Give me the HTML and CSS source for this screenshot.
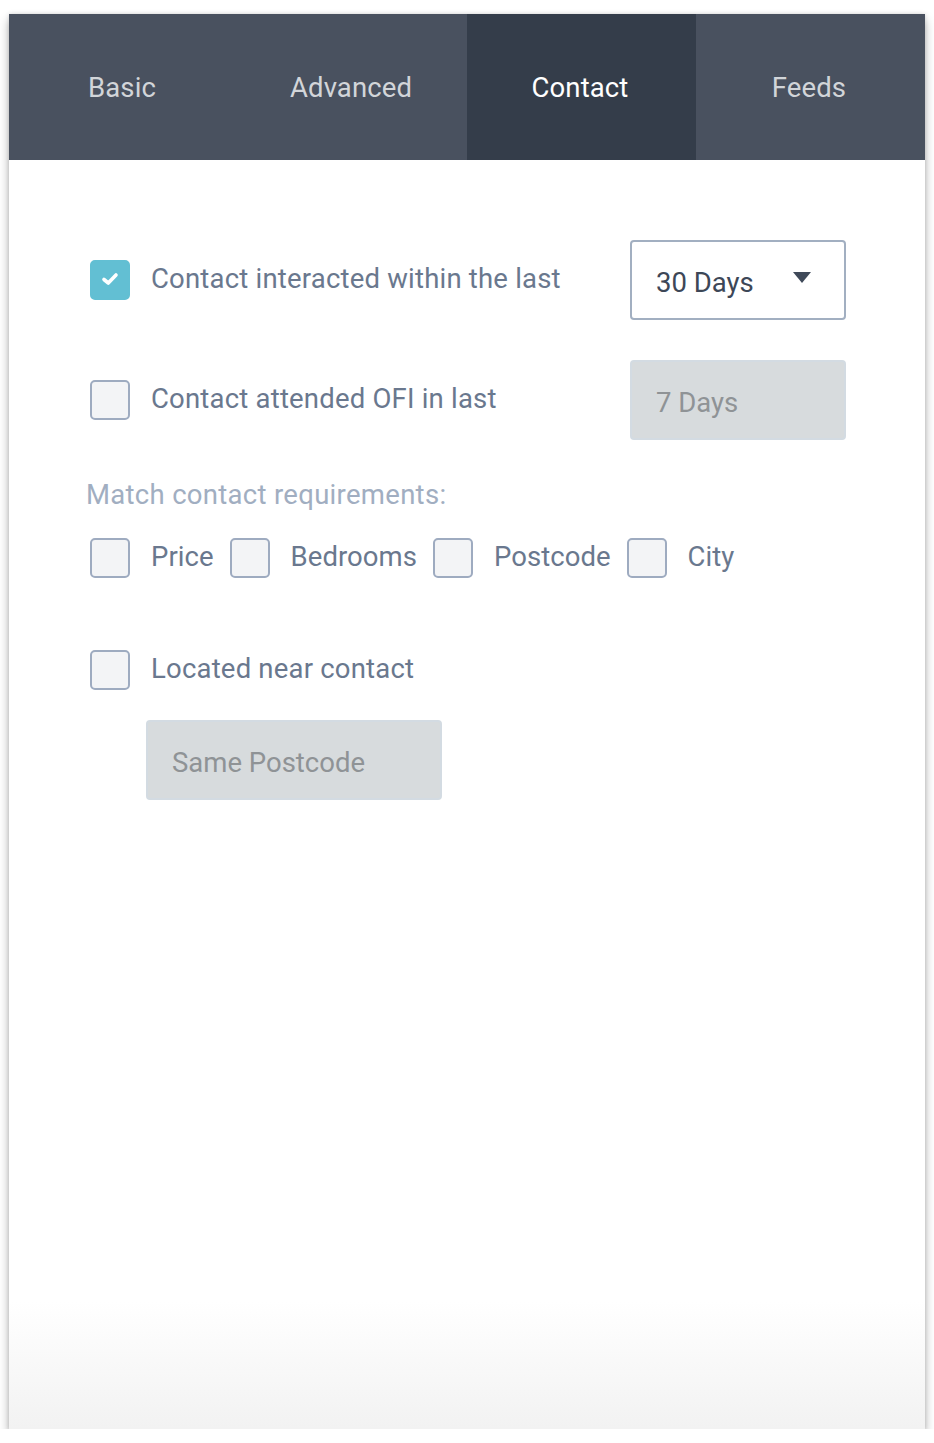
FILE: index.html
```html
<!DOCTYPE html>
<html>
<head>
<meta charset="utf-8">
<link rel="stylesheet" href="styles.css">
</head>
<body>
<div class="panel">
  <nav class="tabs">
    <div class="tab">Basic</div>
    <div class="tab">Advanced</div>
    <div class="tab active">Contact</div>
    <div class="tab">Feeds</div>
  </nav>
  <div class="content">
    <div class="row">
      <span class="cb checked">
        <svg class="check" viewBox="0 0 18 14" width="18" height="14"><path d="M3 7.5 L7.3 11 L15 3" fill="none" stroke="#fff" stroke-width="3.6" stroke-linecap="round" stroke-linejoin="round"/></svg>
      </span>
      <span class="label">Contact interacted within the last</span>
      <div class="select">
        <span>30 Days</span>
        <svg class="caret" viewBox="0 0 18 12" width="18" height="12"><path d="M0 0 H18 L9 11 Z" fill="#3f4959"/></svg>
      </div>
    </div>
    <div class="row">
      <span class="cb"></span>
      <span class="label">Contact attended OFI in last</span>
      <div class="field disabled">7 Days</div>
    </div>
    <div class="section-title">Match contact requirements:</div>
    <div class="req-row">
      <span class="cb"></span><span class="label">Price</span>
      <span class="cb"></span><span class="label">Bedrooms</span>
      <span class="cb"></span><span class="label">Postcode</span>
      <span class="cb"></span><span class="label">City</span>
    </div>
    <div class="near-row">
      <span class="cb"></span>
      <span class="label">Located near contact</span>
    </div>
    <div class="near-field">
      <div class="field disabled wide">Same Postcode</div>
    </div>
  </div>
</div>
</body>
</html>
```

FILE: styles.css
```css
html, body {
  margin: 0;
  padding: 0;
  background: #ffffff;
}
body {
  font-family: Roboto, "Noto Sans", "Liberation Sans", sans-serif;
  padding: 14px 9px 0 9px;
}
.panel {
  width: 916px;
  height: 1415px;
  background: linear-gradient(to bottom, #ffffff 0%, #ffffff 91%, #f2f2f2 100%);
  box-shadow: 0 6px 10px rgba(0, 0, 0, 0.3), 0 0 4px rgba(0, 0, 0, 0.14);
  display: flex;
  flex-direction: column;
}
.tabs {
  display: grid;
  grid-template-columns: repeat(4, 1fr);
  height: 146px;
  background: #49515f;
}
.tab {
  display: flex;
  align-items: center;
  justify-content: center;
  color: #d2d5d9;
  font-size: 27.5px;
  letter-spacing: 0.1px;
  padding-right: 3px;
}
.tab.active {
  background: #343d4a;
  color: #ffffff;
}
.content {
  padding: 80px 79px 0 81px;
  display: flex;
  flex-direction: column;
}
.row {
  display: flex;
  align-items: center;
  height: 80px;
  margin-bottom: 40px;
}
.row .label {
  flex: 1;
  margin-left: 21px;
  margin-top: -4px;
}
.cb {
  width: 40px;
  height: 40px;
  box-sizing: border-box;
  border: 2px solid #9eabc0;
  border-radius: 5px;
  background: #f3f4f6;
  flex: none;
  display: flex;
  align-items: center;
  justify-content: center;
}
.cb.checked {
  background: #62bfd3;
  border-color: #62bfd3;
}
.check {
  margin-top: -2px;
}
.label {
  color: #6a788e;
  font-size: 27.5px;
  letter-spacing: 0.2px;
}
.select {
  width: 216px;
  height: 80px;
  box-sizing: border-box;
  border: 2px solid #a2afc1;
  border-radius: 4px;
  display: flex;
  align-items: center;
  justify-content: space-between;
  padding: 4px 33px 0 24px;
  color: #3d4757;
  font-size: 27.5px;
  background: #fff;
}
.caret {
  margin-top: -8px;
}
.field {
  width: 216px;
  height: 80px;
  box-sizing: border-box;
  border-radius: 4px;
  display: flex;
  align-items: center;
  padding: 4px 24px 0 24px;
  font-size: 27.5px;
}
.field.disabled {
  background: #d7dbdd;
  border: 2px solid #d3dbe2;
  color: #8f9396;
}
.field.wide {
  width: 296px;
}
.section-title {
  color: #a1aec1;
  font-size: 27.5px;
  margin-left: -4px;
  margin-top: 0px;
  line-height: 30px;
  letter-spacing: 0.3px;
}
.req-row {
  display: flex;
  align-items: center;
  margin-top: 28px;
}
.req-row .label {
  margin-left: 21px;
  margin-right: 16px;
  margin-top: -4px;
  letter-spacing: 0.05px;
}
.near-row {
  display: flex;
  align-items: center;
  margin-top: 72px;
}
.near-row .label {
  margin-left: 21px;
  margin-top: -4px;
}
.near-field {
  padding-left: 56px;
  margin-top: 30px;
}
```
